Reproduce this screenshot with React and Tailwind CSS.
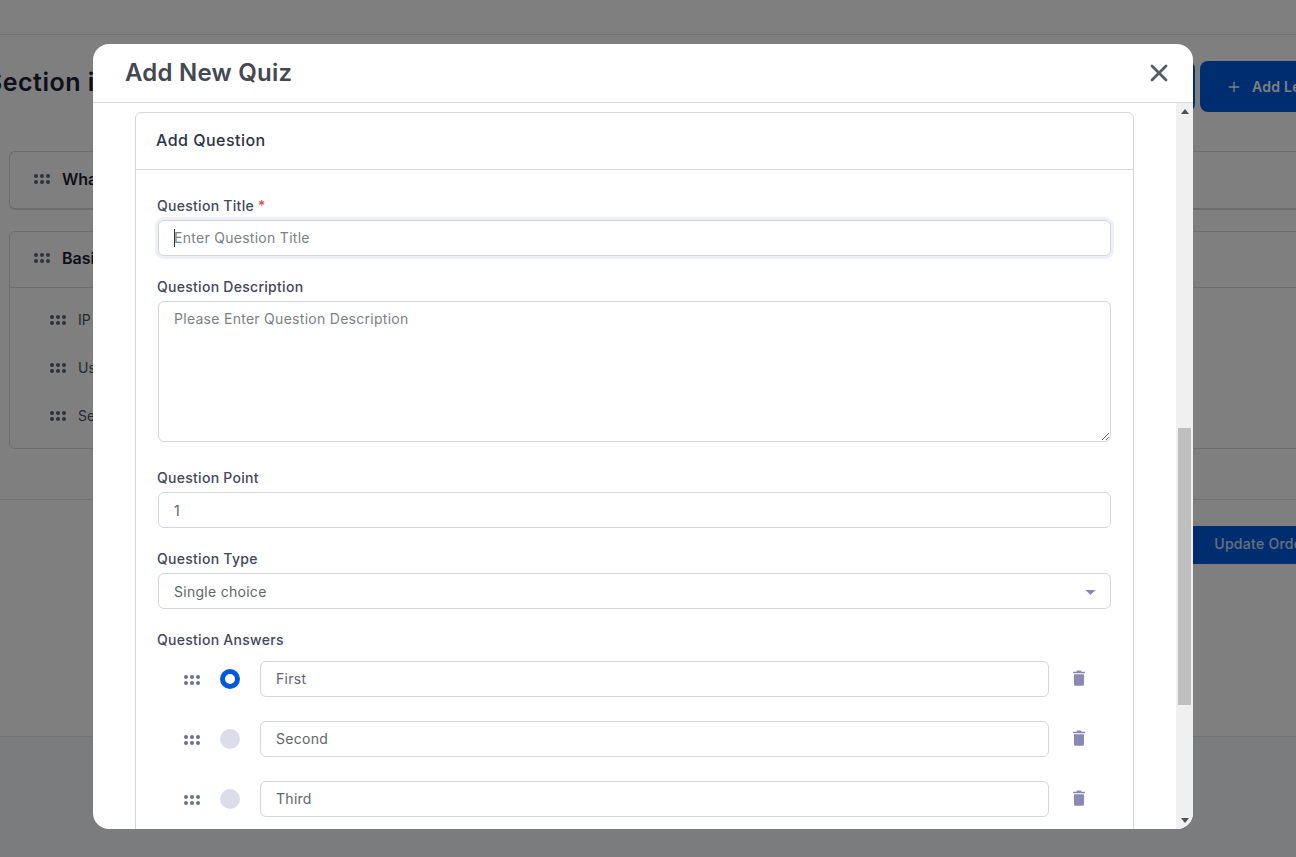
import React from 'react';
import { Plus } from 'lucide-react';

const font = { fontFamily: 'Inter, "Open Sans", sans-serif' };

function Grip({ className }) {
  return (
    <svg width="16" height="10" viewBox="0 0 16 10" className={className} fill="currentColor">
      {[2, 8, 14].map((x) =>
        [2, 8].map((y) => <circle key={`${x}-${y}`} cx={x} cy={y} r="2" />)
      )}
    </svg>
  );
}

function Trash() {
  return (
    <svg width="12" height="16" viewBox="0 0 12 16" fill="#8c88b5">
      <path d="M4 0.5h4l0.6 1.2H12v1.5H0V1.7h3.4z" />
      <path d="M1 4.2h10v10a1.5 1.5 0 0 1-1.5 1.5h-7A1.5 1.5 0 0 1 1 14.2z" />
    </svg>
  );
}

function Label({ children }) {
  return <label className="block -ml-px text-sm font-medium tracking-[0.02em] leading-5 text-[#41475f]">{children}</label>;
}

const inputClass =
  'block w-full h-9 rounded-md border border-[#d4d6dc] bg-white px-[15px] text-sm tracking-[0.02em] text-[#5f6470] placeholder:text-[#7b7f88] outline-none';

function Answer({ value, checked }) {
  return (
    <div className="flex items-center h-9 pl-[26px] pr-[26px]">
      <Grip className="text-[#6b6f93] shrink-0 mt-0.5" />
      {checked ? (
        <span className="ml-5 w-5 h-5 rounded-full border-[5px] border-[#0059db] bg-white shrink-0" />
      ) : (
        <span className="ml-5 w-5 h-5 rounded-full bg-[#dbdeea] shrink-0" />
      )}
      <input className={`${inputClass} ml-5 flex-1 pb-[2px]`} defaultValue={value} />
      <span className="ml-6 w-3 shrink-0 flex mb-0.5">
        <Trash />
      </span>
    </div>
  );
}

function BackgroundPage() {
  return (
    <div className="h-[857px] bg-white overflow-hidden">
      <div className="h-[35px] border-b border-[#e4e6ea]" />
      <div className="-ml-[20px] w-[1500px]">
        <div className="flex items-center justify-between h-[51px] mt-[26px] pl-[6px] pr-[130px]">
          <h2 className="text-[25px] font-semibold tracking-[0.02em] text-[#1a2036] pb-[8px]">Section items order</h2>
          <div className="flex gap-[5px]">
            <button className="w-[150px] h-[51px] rounded-lg bg-[#005ae0] text-white">Add Quiz</button>
            <button className="w-[150px] h-[51px] rounded-lg bg-[#005ae0] text-white text-sm font-semibold tracking-[0.02em] flex items-center pl-[26px] gap-[10px]">
              <Plus size={16} />
              Add Lesson
            </button>
          </div>
        </div>
        <div className="pl-[29px] mt-[39px]">
          <div className="h-[59px] rounded-md border border-[#d8dade] border-b-2 flex items-center pl-6 pb-[2px] gap-3">
            <Grip className="text-[#5f6470]" />
            <span className="text-base font-semibold text-[#1a2036]">What is networking</span>
          </div>
          <div className="h-[218px] mt-[21px] rounded-md border border-[#d8dade]">
            <div className="h-[56px] border-b border-[#d8dade] flex items-center pl-6 pb-[3px] gap-3">
              <Grip className="text-[#5f6470]" />
              <span className="text-base font-semibold text-[#1a2036]">Basic</span>
            </div>
            <div className="pl-10 pt-2 flex flex-col text-sm text-[#4b505c]">
              {['IP addresses', 'Users', 'Security'].map((t) => (
                <div key={t} className="h-12 flex items-center gap-3">
                  <Grip className="text-[#5f6470]" />
                  {t}
                </div>
              ))}
            </div>
          </div>
        </div>
        <div className="mt-[50px] border-t border-[#dfe1e5] h-[237px]">
          <div className="flex justify-end pr-[130px] pt-[26px]">
            <button className="w-[240px] h-[38px] rounded-md bg-[#005ae0] text-white/80 text-sm font-medium tracking-[0.02em] text-right pr-[42px] pb-[2px]">
              Update Order
            </button>
          </div>
        </div>
        <div className="border-t border-[#e4e6ea] bg-[#f6f8fa] h-[130px]" />
      </div>
    </div>
  );
}

export default function App() {
  return (
    <div className="relative w-[1296px] h-[857px] overflow-hidden" style={font}>
      <BackgroundPage />
      <div className="absolute inset-0 bg-black/50" />

      {/* Modal */}
      <div className="absolute left-[93px] top-[44px] w-[1100px] h-[785px] bg-white rounded-2xl overflow-hidden flex flex-col">
        <div className="h-[59px] shrink-0 border-b border-[#d8dade] flex items-center justify-between pl-8 pr-[25px]">
          <h3 className="text-2xl font-semibold tracking-[0.01em] text-[#434852]">Add New Quiz</h3>
          <svg width="18" height="18" viewBox="0 0 18 18" stroke="#555a64" strokeWidth="2.8" strokeLinecap="round">
            <path d="M2 2l14 14M16 2L2 16" />
          </svg>
        </div>

        <div className="relative flex-1 overflow-hidden pl-[42px] pr-[59px] pt-[9px]">
          <div className="rounded-md border border-[#d4d8de] h-[900px]">
            <div className="h-[57px] border-b border-[#d8dade] flex items-center pl-5 pb-[2px]">
              <h4 className="text-base font-medium tracking-[0.03em] text-[#2d334b]">Add Question</h4>
            </div>
            <div className="pl-[22px] pr-[22px] pt-[26px]">
              <Label>
                Question Title <span className="text-[#e5484d]">*</span>
              </Label>
              <div className="relative mt-1">
                <input
                  className={`${inputClass} pb-[2px] shadow-[0_0_0_3px_rgba(80,110,170,0.1)] border-[#c9ccd6]`}
                  placeholder="Enter Question Title"
                />
                <span className="absolute left-[16px] top-[9px] h-[18px] w-px bg-[#30343c]" />
              </div>

              <div className="mt-[21px]">
                <Label>Question Description</Label>
              </div>
              <textarea
                className={`${inputClass} mt-1 h-[141px] pt-[7px] pb-2 leading-[20px]`}
                placeholder="Please Enter Question Description"
              />

              <div className="mt-[26px]">
                <Label>Question Point</Label>
              </div>
              <input className={`${inputClass} mt-1`} defaultValue="1" />

              <div className="mt-[21px]">
                <Label>Question Type</Label>
              </div>
              <div className="relative mt-1">
                <select className={`${inputClass} appearance-none pt-[2px]`} defaultValue="single">
                  <option value="single">Single choice</option>
                </select>
                <svg className="absolute right-[15px] top-[17px]" width="11" height="5" viewBox="0 0 12 6" fill="#8c88b5">
                  <path d="M0 0h12L6 6z" />
                </svg>
              </div>

              <div className="mt-[21px]">
                <Label>Question Answers</Label>
              </div>
              <div className="mt-[11px] flex flex-col gap-6">
                <Answer value="First" checked />
                <Answer value="Second" />
                <Answer value="Third" />
              </div>
            </div>
          </div>

          {/* Scrollbar */}
          <div className="absolute right-0 top-0 bottom-0 w-[17px] bg-[#f0f0f0]">
            <svg className="absolute left-[5px] top-[6px]" width="8" height="5" viewBox="0 0 8 5" fill="#505050">
              <path d="M4 0l4 5H0z" />
            </svg>
            <div className="absolute left-[2px] top-[325px] w-[13px] h-[277px] bg-[#bfbfbf]" />
            <svg className="absolute left-[5px] bottom-[6px]" width="8" height="5" viewBox="0 0 8 5" fill="#505050">
              <path d="M0 0h8L4 5z" />
            </svg>
          </div>
        </div>
      </div>
    </div>
  );
}
